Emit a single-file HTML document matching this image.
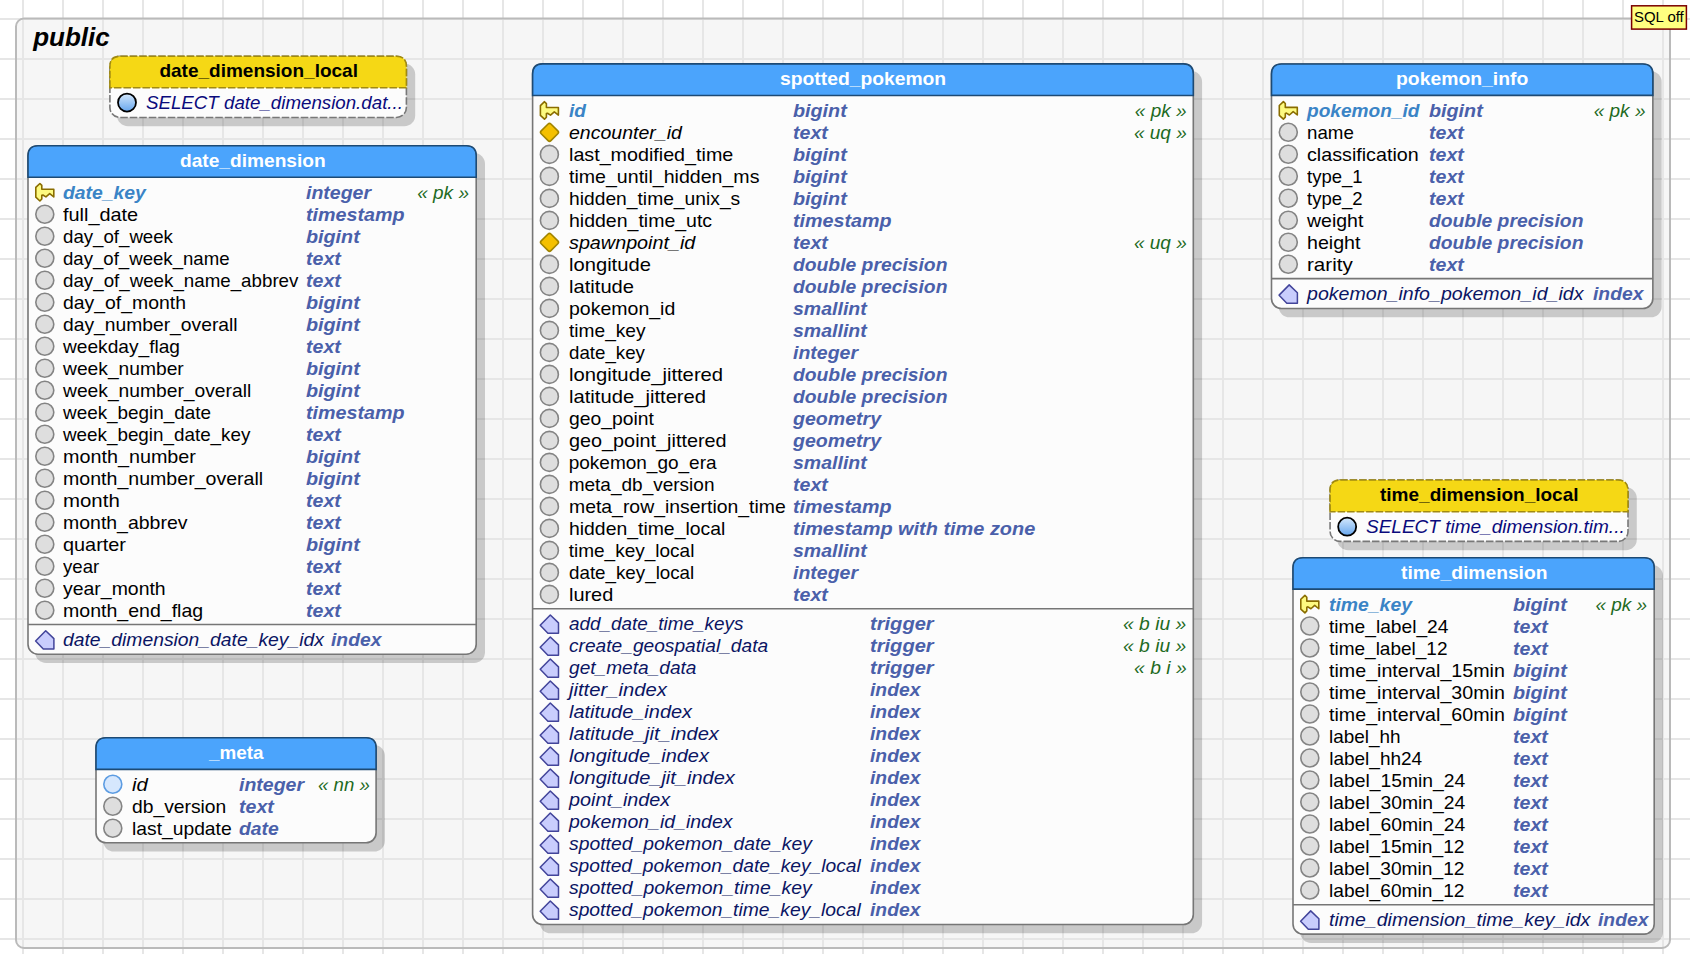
<!DOCTYPE html>
<html><head><meta charset="utf-8"><title>public</title><style>html,body{margin:0;padding:0;}
body{width:1690px;height:954px;position:relative;overflow:hidden;background:#ffffff;font-family:"Liberation Sans", sans-serif;}
svg.bg{position:absolute;left:0;top:0;}
.t{position:absolute;font-size:19px;line-height:22px;white-space:nowrap;transform-origin:0 0;}
</style></head><body>
<svg class="bg" width="1690" height="954" viewBox="0 0 1690 954"><defs><linearGradient id="gv" x1="0" y1="0" x2="0" y2="1"><stop offset="0" stop-color="#d4e8fc"/><stop offset="1" stop-color="#66a6ee"/></linearGradient></defs>
<rect x="0" y="0" width="1690" height="954" fill="#ffffff"/>
<rect x="16" y="18.5" width="1654" height="929.5" rx="8" fill="#f6f6f6"/>
<path d="M23,0V954M63,0V954M103,0V954M143,0V954M183,0V954M223,0V954M263,0V954M303,0V954M343,0V954M383,0V954M423,0V954M463,0V954M503,0V954M543,0V954M583,0V954M623,0V954M663,0V954M703,0V954M743,0V954M783,0V954M823,0V954M863,0V954M903,0V954M943,0V954M983,0V954M1023,0V954M1063,0V954M1103,0V954M1143,0V954M1183,0V954M1223,0V954M1263,0V954M1303,0V954M1343,0V954M1383,0V954M1423,0V954M1463,0V954M1503,0V954M1543,0V954M1583,0V954M1623,0V954M1663,0V954M0,19H1690M0,59H1690M0,99H1690M0,139H1690M0,179H1690M0,219H1690M0,259H1690M0,299H1690M0,339H1690M0,379H1690M0,419H1690M0,459H1690M0,499H1690M0,539H1690M0,579H1690M0,619H1690M0,659H1690M0,699H1690M0,739H1690M0,779H1690M0,819H1690M0,859H1690M0,899H1690M0,939H1690" stroke="#e6e6e6" stroke-width="2" fill="none"/>
<rect x="16" y="18.5" width="1654" height="929.5" rx="8" fill="none" stroke="#bababa" stroke-width="2"/>
<rect x="1631.6" y="5.8" width="54.8" height="23.3" fill="#ffff80" stroke="#7a0000" stroke-width="1.5"/>
<rect x="117.10" y="63.50" width="298.10" height="62.75" rx="10.8" fill="rgba(0,0,0,0.18)"/>
<rect x="109.90" y="56.30" width="296.50" height="61.15" rx="10" fill="#fcfcfc" stroke="#787878" stroke-width="1.6" stroke-dasharray="7.5 2"/>
<path d="M109.9,87.7 L109.9,66.3 Q109.9,56.3 119.9,56.3 L396.4,56.3 Q406.4,56.3 406.4,66.3 L406.4,87.7 Z" fill="#f5d815" stroke="#a18a10" stroke-width="1.6" stroke-dasharray="7.5 2"/>
<g transform="translate(109.90,91.40)"><circle cx="17.1" cy="11.2" r="9.0" fill="url(#gv)" stroke="#000" stroke-width="1.8"/></g>
<rect x="35.20" y="153.00" width="449.80" height="510.00" rx="10.8" fill="rgba(0,0,0,0.18)"/>
<rect x="28.00" y="145.80" width="448.20" height="508.40" rx="10" fill="#fcfcfc" stroke="#767676" stroke-width="1.6"/>
<path d="M28.0,177.3 L28.0,155.8 Q28.0,145.8 38.0,145.8 L466.2,145.8 Q476.2,145.8 476.2,155.8 L476.2,177.3 Z" fill="#4ba4fc" stroke="#1d4a74" stroke-width="1.6"/>
<g transform="translate(28.00,181.00)"><polygon points="11.9,2.5 13.8,4.4 13.8,8.3 25.8,8.3 25.8,15.9 21.7,12.6 17.9,15.9 14.9,14.0 13.8,14.3 13.8,18.0 11.9,20.0 7.8,16.2 7.8,6.4" fill="#fdfa80" stroke="#8a6d00" stroke-width="1.6" stroke-linejoin="round"/></g>
<g transform="translate(28.00,203.00)"><circle cx="16.8" cy="11.2" r="9.0" fill="#dedede" stroke="#848484" stroke-width="1.6"/></g>
<g transform="translate(28.00,225.00)"><circle cx="16.8" cy="11.2" r="9.0" fill="#dedede" stroke="#848484" stroke-width="1.6"/></g>
<g transform="translate(28.00,247.00)"><circle cx="16.8" cy="11.2" r="9.0" fill="#dedede" stroke="#848484" stroke-width="1.6"/></g>
<g transform="translate(28.00,269.00)"><circle cx="16.8" cy="11.2" r="9.0" fill="#dedede" stroke="#848484" stroke-width="1.6"/></g>
<g transform="translate(28.00,291.00)"><circle cx="16.8" cy="11.2" r="9.0" fill="#dedede" stroke="#848484" stroke-width="1.6"/></g>
<g transform="translate(28.00,313.00)"><circle cx="16.8" cy="11.2" r="9.0" fill="#dedede" stroke="#848484" stroke-width="1.6"/></g>
<g transform="translate(28.00,335.00)"><circle cx="16.8" cy="11.2" r="9.0" fill="#dedede" stroke="#848484" stroke-width="1.6"/></g>
<g transform="translate(28.00,357.00)"><circle cx="16.8" cy="11.2" r="9.0" fill="#dedede" stroke="#848484" stroke-width="1.6"/></g>
<g transform="translate(28.00,379.00)"><circle cx="16.8" cy="11.2" r="9.0" fill="#dedede" stroke="#848484" stroke-width="1.6"/></g>
<g transform="translate(28.00,401.00)"><circle cx="16.8" cy="11.2" r="9.0" fill="#dedede" stroke="#848484" stroke-width="1.6"/></g>
<g transform="translate(28.00,423.00)"><circle cx="16.8" cy="11.2" r="9.0" fill="#dedede" stroke="#848484" stroke-width="1.6"/></g>
<g transform="translate(28.00,445.00)"><circle cx="16.8" cy="11.2" r="9.0" fill="#dedede" stroke="#848484" stroke-width="1.6"/></g>
<g transform="translate(28.00,467.00)"><circle cx="16.8" cy="11.2" r="9.0" fill="#dedede" stroke="#848484" stroke-width="1.6"/></g>
<g transform="translate(28.00,489.00)"><circle cx="16.8" cy="11.2" r="9.0" fill="#dedede" stroke="#848484" stroke-width="1.6"/></g>
<g transform="translate(28.00,511.00)"><circle cx="16.8" cy="11.2" r="9.0" fill="#dedede" stroke="#848484" stroke-width="1.6"/></g>
<g transform="translate(28.00,533.00)"><circle cx="16.8" cy="11.2" r="9.0" fill="#dedede" stroke="#848484" stroke-width="1.6"/></g>
<g transform="translate(28.00,555.00)"><circle cx="16.8" cy="11.2" r="9.0" fill="#dedede" stroke="#848484" stroke-width="1.6"/></g>
<g transform="translate(28.00,577.00)"><circle cx="16.8" cy="11.2" r="9.0" fill="#dedede" stroke="#848484" stroke-width="1.6"/></g>
<g transform="translate(28.00,599.00)"><circle cx="16.8" cy="11.2" r="9.0" fill="#dedede" stroke="#848484" stroke-width="1.6"/></g>
<line x1="28.00" y1="624.50" x2="476.20" y2="624.50" stroke="#767676" stroke-width="1.6"/>
<g transform="translate(28.00,628.00)"><polygon points="17.7,2.7 25.9,10.6 25.9,21.0 15.3,21.0 7.6,13.0" fill="#c9cdfd" stroke="#42449a" stroke-width="1.5" stroke-linejoin="round"/></g>
<rect x="103.20" y="745.00" width="281.70" height="106.60" rx="10.8" fill="rgba(0,0,0,0.18)"/>
<rect x="96.00" y="737.80" width="280.10" height="105.00" rx="10" fill="#fcfcfc" stroke="#767676" stroke-width="1.6"/>
<path d="M96.0,769.4 L96.0,747.8 Q96.0,737.8 106.0,737.8 L366.1,737.8 Q376.1,737.8 376.1,747.8 L376.1,769.4 Z" fill="#4ba4fc" stroke="#1d4a74" stroke-width="1.6"/>
<g transform="translate(96.00,773.10)"><circle cx="16.8" cy="11.1" r="9.0" fill="#d6e7fd" stroke="#5c9ce2" stroke-width="1.6"/></g>
<g transform="translate(96.00,795.10)"><circle cx="16.8" cy="11.2" r="9.0" fill="#dedede" stroke="#848484" stroke-width="1.6"/></g>
<g transform="translate(96.00,817.10)"><circle cx="16.8" cy="11.2" r="9.0" fill="#dedede" stroke="#848484" stroke-width="1.6"/></g>
<rect x="539.80" y="71.10" width="662.30" height="862.20" rx="10.8" fill="rgba(0,0,0,0.18)"/>
<rect x="532.60" y="63.90" width="660.70" height="860.60" rx="10" fill="#fcfcfc" stroke="#767676" stroke-width="1.6"/>
<path d="M532.6,95.5 L532.6,73.9 Q532.6,63.9 542.6,63.9 L1183.3,63.9 Q1193.3,63.9 1193.3,73.9 L1193.3,95.5 Z" fill="#4ba4fc" stroke="#1d4a74" stroke-width="1.6"/>
<g transform="translate(532.60,99.20)"><polygon points="11.9,2.5 13.8,4.4 13.8,8.3 25.8,8.3 25.8,15.9 21.7,12.6 17.9,15.9 14.9,14.0 13.8,14.3 13.8,18.0 11.9,20.0 7.8,16.2 7.8,6.4" fill="#fdfa80" stroke="#8a6d00" stroke-width="1.6" stroke-linejoin="round"/></g>
<g transform="translate(532.60,121.20)"><rect x="-6.88" y="-6.88" width="13.76" height="13.76" rx="2" transform="translate(16.9,11.1) rotate(45)" fill="#f4c000" stroke="#a08400" stroke-width="1.6"/></g>
<g transform="translate(532.60,143.20)"><circle cx="16.8" cy="11.2" r="9.0" fill="#dedede" stroke="#848484" stroke-width="1.6"/></g>
<g transform="translate(532.60,165.20)"><circle cx="16.8" cy="11.2" r="9.0" fill="#dedede" stroke="#848484" stroke-width="1.6"/></g>
<g transform="translate(532.60,187.20)"><circle cx="16.8" cy="11.2" r="9.0" fill="#dedede" stroke="#848484" stroke-width="1.6"/></g>
<g transform="translate(532.60,209.20)"><circle cx="16.8" cy="11.2" r="9.0" fill="#dedede" stroke="#848484" stroke-width="1.6"/></g>
<g transform="translate(532.60,231.20)"><rect x="-6.88" y="-6.88" width="13.76" height="13.76" rx="2" transform="translate(16.9,11.1) rotate(45)" fill="#f4c000" stroke="#a08400" stroke-width="1.6"/></g>
<g transform="translate(532.60,253.20)"><circle cx="16.8" cy="11.2" r="9.0" fill="#dedede" stroke="#848484" stroke-width="1.6"/></g>
<g transform="translate(532.60,275.20)"><circle cx="16.8" cy="11.2" r="9.0" fill="#dedede" stroke="#848484" stroke-width="1.6"/></g>
<g transform="translate(532.60,297.20)"><circle cx="16.8" cy="11.2" r="9.0" fill="#dedede" stroke="#848484" stroke-width="1.6"/></g>
<g transform="translate(532.60,319.20)"><circle cx="16.8" cy="11.2" r="9.0" fill="#dedede" stroke="#848484" stroke-width="1.6"/></g>
<g transform="translate(532.60,341.20)"><circle cx="16.8" cy="11.2" r="9.0" fill="#dedede" stroke="#848484" stroke-width="1.6"/></g>
<g transform="translate(532.60,363.20)"><circle cx="16.8" cy="11.2" r="9.0" fill="#dedede" stroke="#848484" stroke-width="1.6"/></g>
<g transform="translate(532.60,385.20)"><circle cx="16.8" cy="11.2" r="9.0" fill="#dedede" stroke="#848484" stroke-width="1.6"/></g>
<g transform="translate(532.60,407.20)"><circle cx="16.8" cy="11.2" r="9.0" fill="#dedede" stroke="#848484" stroke-width="1.6"/></g>
<g transform="translate(532.60,429.20)"><circle cx="16.8" cy="11.2" r="9.0" fill="#dedede" stroke="#848484" stroke-width="1.6"/></g>
<g transform="translate(532.60,451.20)"><circle cx="16.8" cy="11.2" r="9.0" fill="#dedede" stroke="#848484" stroke-width="1.6"/></g>
<g transform="translate(532.60,473.20)"><circle cx="16.8" cy="11.2" r="9.0" fill="#dedede" stroke="#848484" stroke-width="1.6"/></g>
<g transform="translate(532.60,495.20)"><circle cx="16.8" cy="11.2" r="9.0" fill="#dedede" stroke="#848484" stroke-width="1.6"/></g>
<g transform="translate(532.60,517.20)"><circle cx="16.8" cy="11.2" r="9.0" fill="#dedede" stroke="#848484" stroke-width="1.6"/></g>
<g transform="translate(532.60,539.20)"><circle cx="16.8" cy="11.2" r="9.0" fill="#dedede" stroke="#848484" stroke-width="1.6"/></g>
<g transform="translate(532.60,561.20)"><circle cx="16.8" cy="11.2" r="9.0" fill="#dedede" stroke="#848484" stroke-width="1.6"/></g>
<g transform="translate(532.60,583.20)"><circle cx="16.8" cy="11.2" r="9.0" fill="#dedede" stroke="#848484" stroke-width="1.6"/></g>
<line x1="532.60" y1="608.80" x2="1193.30" y2="608.80" stroke="#767676" stroke-width="1.6"/>
<g transform="translate(532.60,612.30)"><polygon points="17.7,2.7 25.9,10.6 25.9,21.0 15.3,21.0 7.6,13.0" fill="#c9cdfd" stroke="#42449a" stroke-width="1.5" stroke-linejoin="round"/></g>
<g transform="translate(532.60,634.30)"><polygon points="17.7,2.7 25.9,10.6 25.9,21.0 15.3,21.0 7.6,13.0" fill="#c9cdfd" stroke="#42449a" stroke-width="1.5" stroke-linejoin="round"/></g>
<g transform="translate(532.60,656.30)"><polygon points="17.7,2.7 25.9,10.6 25.9,21.0 15.3,21.0 7.6,13.0" fill="#c9cdfd" stroke="#42449a" stroke-width="1.5" stroke-linejoin="round"/></g>
<g transform="translate(532.60,678.30)"><polygon points="17.7,2.7 25.9,10.6 25.9,21.0 15.3,21.0 7.6,13.0" fill="#c9cdfd" stroke="#42449a" stroke-width="1.5" stroke-linejoin="round"/></g>
<g transform="translate(532.60,700.30)"><polygon points="17.7,2.7 25.9,10.6 25.9,21.0 15.3,21.0 7.6,13.0" fill="#c9cdfd" stroke="#42449a" stroke-width="1.5" stroke-linejoin="round"/></g>
<g transform="translate(532.60,722.30)"><polygon points="17.7,2.7 25.9,10.6 25.9,21.0 15.3,21.0 7.6,13.0" fill="#c9cdfd" stroke="#42449a" stroke-width="1.5" stroke-linejoin="round"/></g>
<g transform="translate(532.60,744.30)"><polygon points="17.7,2.7 25.9,10.6 25.9,21.0 15.3,21.0 7.6,13.0" fill="#c9cdfd" stroke="#42449a" stroke-width="1.5" stroke-linejoin="round"/></g>
<g transform="translate(532.60,766.30)"><polygon points="17.7,2.7 25.9,10.6 25.9,21.0 15.3,21.0 7.6,13.0" fill="#c9cdfd" stroke="#42449a" stroke-width="1.5" stroke-linejoin="round"/></g>
<g transform="translate(532.60,788.30)"><polygon points="17.7,2.7 25.9,10.6 25.9,21.0 15.3,21.0 7.6,13.0" fill="#c9cdfd" stroke="#42449a" stroke-width="1.5" stroke-linejoin="round"/></g>
<g transform="translate(532.60,810.30)"><polygon points="17.7,2.7 25.9,10.6 25.9,21.0 15.3,21.0 7.6,13.0" fill="#c9cdfd" stroke="#42449a" stroke-width="1.5" stroke-linejoin="round"/></g>
<g transform="translate(532.60,832.30)"><polygon points="17.7,2.7 25.9,10.6 25.9,21.0 15.3,21.0 7.6,13.0" fill="#c9cdfd" stroke="#42449a" stroke-width="1.5" stroke-linejoin="round"/></g>
<g transform="translate(532.60,854.30)"><polygon points="17.7,2.7 25.9,10.6 25.9,21.0 15.3,21.0 7.6,13.0" fill="#c9cdfd" stroke="#42449a" stroke-width="1.5" stroke-linejoin="round"/></g>
<g transform="translate(532.60,876.30)"><polygon points="17.7,2.7 25.9,10.6 25.9,21.0 15.3,21.0 7.6,13.0" fill="#c9cdfd" stroke="#42449a" stroke-width="1.5" stroke-linejoin="round"/></g>
<g transform="translate(532.60,898.30)"><polygon points="17.7,2.7 25.9,10.6 25.9,21.0 15.3,21.0 7.6,13.0" fill="#c9cdfd" stroke="#42449a" stroke-width="1.5" stroke-linejoin="round"/></g>
<rect x="1278.70" y="71.20" width="382.95" height="246.10" rx="10.8" fill="rgba(0,0,0,0.18)"/>
<rect x="1271.50" y="64.00" width="381.35" height="244.50" rx="10" fill="#fcfcfc" stroke="#767676" stroke-width="1.6"/>
<path d="M1271.5,95.4 L1271.5,74.0 Q1271.5,64.0 1281.5,64.0 L1642.85,64.0 Q1652.85,64.0 1652.85,74.0 L1652.85,95.4 Z" fill="#4ba4fc" stroke="#1d4a74" stroke-width="1.6"/>
<g transform="translate(1271.50,99.10)"><polygon points="11.9,2.5 13.8,4.4 13.8,8.3 25.8,8.3 25.8,15.9 21.7,12.6 17.9,15.9 14.9,14.0 13.8,14.3 13.8,18.0 11.9,20.0 7.8,16.2 7.8,6.4" fill="#fdfa80" stroke="#8a6d00" stroke-width="1.6" stroke-linejoin="round"/></g>
<g transform="translate(1271.50,121.10)"><circle cx="16.8" cy="11.2" r="9.0" fill="#dedede" stroke="#848484" stroke-width="1.6"/></g>
<g transform="translate(1271.50,143.10)"><circle cx="16.8" cy="11.2" r="9.0" fill="#dedede" stroke="#848484" stroke-width="1.6"/></g>
<g transform="translate(1271.50,165.10)"><circle cx="16.8" cy="11.2" r="9.0" fill="#dedede" stroke="#848484" stroke-width="1.6"/></g>
<g transform="translate(1271.50,187.10)"><circle cx="16.8" cy="11.2" r="9.0" fill="#dedede" stroke="#848484" stroke-width="1.6"/></g>
<g transform="translate(1271.50,209.10)"><circle cx="16.8" cy="11.2" r="9.0" fill="#dedede" stroke="#848484" stroke-width="1.6"/></g>
<g transform="translate(1271.50,231.10)"><circle cx="16.8" cy="11.2" r="9.0" fill="#dedede" stroke="#848484" stroke-width="1.6"/></g>
<g transform="translate(1271.50,253.10)"><circle cx="16.8" cy="11.2" r="9.0" fill="#dedede" stroke="#848484" stroke-width="1.6"/></g>
<line x1="1271.50" y1="278.65" x2="1652.85" y2="278.65" stroke="#767676" stroke-width="1.6"/>
<g transform="translate(1271.50,282.15)"><polygon points="17.7,2.7 25.9,10.6 25.9,21.0 15.3,21.0 7.6,13.0" fill="#c9cdfd" stroke="#42449a" stroke-width="1.5" stroke-linejoin="round"/></g>
<rect x="1337.27" y="487.25" width="299.53" height="62.95" rx="10.8" fill="rgba(0,0,0,0.18)"/>
<rect x="1330.07" y="480.05" width="297.93" height="61.35" rx="10" fill="#fcfcfc" stroke="#787878" stroke-width="1.6" stroke-dasharray="7.5 2"/>
<path d="M1330.07,511.76 L1330.07,490.05 Q1330.07,480.05 1340.07,480.05 L1618.0,480.05 Q1628.0,480.05 1628.0,490.05 L1628.0,511.76 Z" fill="#f5d815" stroke="#a18a10" stroke-width="1.6" stroke-dasharray="7.5 2"/>
<g transform="translate(1330.07,515.46)"><circle cx="17.1" cy="11.2" r="9.0" fill="url(#gv)" stroke="#000" stroke-width="1.8"/></g>
<rect x="1300.20" y="565.00" width="362.80" height="377.90" rx="10.8" fill="rgba(0,0,0,0.18)"/>
<rect x="1293.00" y="557.80" width="361.20" height="376.30" rx="10" fill="#fcfcfc" stroke="#767676" stroke-width="1.6"/>
<path d="M1293.0,589.15 L1293.0,567.8 Q1293.0,557.8 1303.0,557.8 L1644.2,557.8 Q1654.2,557.8 1654.2,567.8 L1654.2,589.15 Z" fill="#4ba4fc" stroke="#1d4a74" stroke-width="1.6"/>
<g transform="translate(1293.00,592.85)"><polygon points="11.9,2.5 13.8,4.4 13.8,8.3 25.8,8.3 25.8,15.9 21.7,12.6 17.9,15.9 14.9,14.0 13.8,14.3 13.8,18.0 11.9,20.0 7.8,16.2 7.8,6.4" fill="#fdfa80" stroke="#8a6d00" stroke-width="1.6" stroke-linejoin="round"/></g>
<g transform="translate(1293.00,614.85)"><circle cx="16.8" cy="11.2" r="9.0" fill="#dedede" stroke="#848484" stroke-width="1.6"/></g>
<g transform="translate(1293.00,636.85)"><circle cx="16.8" cy="11.2" r="9.0" fill="#dedede" stroke="#848484" stroke-width="1.6"/></g>
<g transform="translate(1293.00,658.85)"><circle cx="16.8" cy="11.2" r="9.0" fill="#dedede" stroke="#848484" stroke-width="1.6"/></g>
<g transform="translate(1293.00,680.85)"><circle cx="16.8" cy="11.2" r="9.0" fill="#dedede" stroke="#848484" stroke-width="1.6"/></g>
<g transform="translate(1293.00,702.85)"><circle cx="16.8" cy="11.2" r="9.0" fill="#dedede" stroke="#848484" stroke-width="1.6"/></g>
<g transform="translate(1293.00,724.85)"><circle cx="16.8" cy="11.2" r="9.0" fill="#dedede" stroke="#848484" stroke-width="1.6"/></g>
<g transform="translate(1293.00,746.85)"><circle cx="16.8" cy="11.2" r="9.0" fill="#dedede" stroke="#848484" stroke-width="1.6"/></g>
<g transform="translate(1293.00,768.85)"><circle cx="16.8" cy="11.2" r="9.0" fill="#dedede" stroke="#848484" stroke-width="1.6"/></g>
<g transform="translate(1293.00,790.85)"><circle cx="16.8" cy="11.2" r="9.0" fill="#dedede" stroke="#848484" stroke-width="1.6"/></g>
<g transform="translate(1293.00,812.85)"><circle cx="16.8" cy="11.2" r="9.0" fill="#dedede" stroke="#848484" stroke-width="1.6"/></g>
<g transform="translate(1293.00,834.85)"><circle cx="16.8" cy="11.2" r="9.0" fill="#dedede" stroke="#848484" stroke-width="1.6"/></g>
<g transform="translate(1293.00,856.85)"><circle cx="16.8" cy="11.2" r="9.0" fill="#dedede" stroke="#848484" stroke-width="1.6"/></g>
<g transform="translate(1293.00,878.85)"><circle cx="16.8" cy="11.2" r="9.0" fill="#dedede" stroke="#848484" stroke-width="1.6"/></g>
<line x1="1293.00" y1="904.70" x2="1654.20" y2="904.70" stroke="#767676" stroke-width="1.6"/>
<g transform="translate(1293.00,908.20)"><polygon points="17.7,2.7 25.9,10.6 25.9,21.0 15.3,21.0 7.6,13.0" fill="#c9cdfd" stroke="#42449a" stroke-width="1.5" stroke-linejoin="round"/></g>
</svg>
<div class="t" style="left:33.20px;top:22.40px;color:#000;font-weight:bold;font-style:italic;font-size:26px;line-height:30px;">public</div>
<div class="t" style="left:1633.91px;top:4.80px;color:#000;font-size:15px;line-height:24px;transform:scaleX(0.9939);">SQL off</div>
<div class="t" style="left:159.45px;top:60.30px;color:#000;font-weight:bold;">date_dimension_local</div>
<div class="t" style="left:145.90px;top:92.40px;color:#0a0a7c;font-style:italic;transform:scaleX(0.9849);">SELECT date_dimension.dat...</div>
<div class="t" style="left:179.60px;top:149.80px;color:#fff;font-weight:bold;transform:scaleX(1.0069);">date_dimension</div>
<div class="t" style="left:63.30px;top:182.00px;color:#3a84c6;font-weight:bold;font-style:italic;transform:scaleX(1.0183);">date_key</div>
<div class="t" style="left:306.40px;top:182.00px;color:#4a60aa;font-weight:bold;font-style:italic;transform:scaleX(1.0262);">integer</div>
<div class="t" style="left:417.20px;top:182.00px;color:#1e6a1e;font-style:italic;">« pk »</div>
<div class="t" style="left:63.30px;top:204.00px;color:#000000;transform:scaleX(1.0465);">full_date</div>
<div class="t" style="left:306.40px;top:204.00px;color:#4a60aa;font-weight:bold;font-style:italic;transform:scaleX(1.0372);">timestamp</div>
<div class="t" style="left:63.30px;top:226.00px;color:#000000;transform:scaleX(0.9820);">day_of_week</div>
<div class="t" style="left:306.40px;top:226.00px;color:#4a60aa;font-weight:bold;font-style:italic;transform:scaleX(1.0396);">bigint</div>
<div class="t" style="left:63.30px;top:248.00px;color:#000000;transform:scaleX(0.9793);">day_of_week_name</div>
<div class="t" style="left:306.40px;top:248.00px;color:#4a60aa;font-weight:bold;font-style:italic;transform:scaleX(1.0294);">text</div>
<div class="t" style="left:63.30px;top:270.00px;color:#000000;transform:scaleX(0.9861);">day_of_week_name_abbrev</div>
<div class="t" style="left:306.40px;top:270.00px;color:#4a60aa;font-weight:bold;font-style:italic;transform:scaleX(1.0294);">text</div>
<div class="t" style="left:63.30px;top:292.00px;color:#000000;transform:scaleX(1.0212);">day_of_month</div>
<div class="t" style="left:306.40px;top:292.00px;color:#4a60aa;font-weight:bold;font-style:italic;transform:scaleX(1.0396);">bigint</div>
<div class="t" style="left:63.30px;top:314.00px;color:#000000;transform:scaleX(1.0141);">day_number_overall</div>
<div class="t" style="left:306.40px;top:314.00px;color:#4a60aa;font-weight:bold;font-style:italic;transform:scaleX(1.0396);">bigint</div>
<div class="t" style="left:63.30px;top:336.00px;color:#000000;transform:scaleX(1.0070);">weekday_flag</div>
<div class="t" style="left:306.40px;top:336.00px;color:#4a60aa;font-weight:bold;font-style:italic;transform:scaleX(1.0294);">text</div>
<div class="t" style="left:63.30px;top:358.00px;color:#000000;transform:scaleX(1.0118);">week_number</div>
<div class="t" style="left:306.40px;top:358.00px;color:#4a60aa;font-weight:bold;font-style:italic;transform:scaleX(1.0396);">bigint</div>
<div class="t" style="left:63.30px;top:380.00px;color:#000000;transform:scaleX(1.0124);">week_number_overall</div>
<div class="t" style="left:306.40px;top:380.00px;color:#4a60aa;font-weight:bold;font-style:italic;transform:scaleX(1.0396);">bigint</div>
<div class="t" style="left:63.30px;top:402.00px;color:#000000;transform:scaleX(0.9940);">week_begin_date</div>
<div class="t" style="left:306.40px;top:402.00px;color:#4a60aa;font-weight:bold;font-style:italic;transform:scaleX(1.0372);">timestamp</div>
<div class="t" style="left:63.30px;top:424.00px;color:#000000;transform:scaleX(0.9910);">week_begin_date_key</div>
<div class="t" style="left:306.40px;top:424.00px;color:#4a60aa;font-weight:bold;font-style:italic;transform:scaleX(1.0294);">text</div>
<div class="t" style="left:63.30px;top:446.00px;color:#000000;transform:scaleX(1.0402);">month_number</div>
<div class="t" style="left:306.40px;top:446.00px;color:#4a60aa;font-weight:bold;font-style:italic;transform:scaleX(1.0396);">bigint</div>
<div class="t" style="left:63.30px;top:468.00px;color:#000000;transform:scaleX(1.0302);">month_number_overall</div>
<div class="t" style="left:306.40px;top:468.00px;color:#4a60aa;font-weight:bold;font-style:italic;transform:scaleX(1.0396);">bigint</div>
<div class="t" style="left:63.30px;top:490.00px;color:#000000;transform:scaleX(1.0745);">month</div>
<div class="t" style="left:306.40px;top:490.00px;color:#4a60aa;font-weight:bold;font-style:italic;transform:scaleX(1.0294);">text</div>
<div class="t" style="left:63.30px;top:512.00px;color:#000000;transform:scaleX(1.0248);">month_abbrev</div>
<div class="t" style="left:306.40px;top:512.00px;color:#4a60aa;font-weight:bold;font-style:italic;transform:scaleX(1.0294);">text</div>
<div class="t" style="left:63.30px;top:534.00px;color:#000000;transform:scaleX(1.0458);">quarter</div>
<div class="t" style="left:306.40px;top:534.00px;color:#4a60aa;font-weight:bold;font-style:italic;transform:scaleX(1.0396);">bigint</div>
<div class="t" style="left:63.30px;top:556.00px;color:#000000;transform:scaleX(0.9784);">year</div>
<div class="t" style="left:306.40px;top:556.00px;color:#4a60aa;font-weight:bold;font-style:italic;transform:scaleX(1.0294);">text</div>
<div class="t" style="left:63.30px;top:578.00px;color:#000000;transform:scaleX(1.0232);">year_month</div>
<div class="t" style="left:306.40px;top:578.00px;color:#4a60aa;font-weight:bold;font-style:italic;transform:scaleX(1.0294);">text</div>
<div class="t" style="left:63.30px;top:600.00px;color:#000000;transform:scaleX(1.0284);">month_end_flag</div>
<div class="t" style="left:306.40px;top:600.00px;color:#4a60aa;font-weight:bold;font-style:italic;transform:scaleX(1.0294);">text</div>
<div class="t" style="left:63.30px;top:629.00px;color:#0b1563;font-style:italic;transform:scaleX(1.0163);">date_dimension_date_key_idx</div>
<div class="t" style="left:331.00px;top:629.00px;color:#4a60aa;font-weight:bold;font-style:italic;transform:scaleX(1.0160);">index</div>
<div class="t" style="left:208.80px;top:741.80px;color:#fff;font-weight:bold;transform:scaleX(0.9909);">_meta</div>
<div class="t" style="left:132.00px;top:774.10px;color:#000000;font-style:italic;transform:scaleX(1.0687);">id</div>
<div class="t" style="left:239.20px;top:774.10px;color:#4a60aa;font-weight:bold;font-style:italic;transform:scaleX(1.0262);">integer</div>
<div class="t" style="left:317.70px;top:774.10px;color:#1e6a1e;font-style:italic;transform:scaleX(0.9804);">« nn »</div>
<div class="t" style="left:132.00px;top:796.10px;color:#000000;transform:scaleX(1.0143);">db_version</div>
<div class="t" style="left:239.20px;top:796.10px;color:#4a60aa;font-weight:bold;font-style:italic;transform:scaleX(1.0294);">text</div>
<div class="t" style="left:132.00px;top:818.10px;color:#000000;transform:scaleX(1.0144);">last_update</div>
<div class="t" style="left:239.20px;top:818.10px;color:#4a60aa;font-weight:bold;font-style:italic;transform:scaleX(1.0179);">date</div>
<div class="t" style="left:779.68px;top:67.90px;color:#fff;font-weight:bold;transform:scaleX(1.0154);">spotted_pokemon</div>
<div class="t" style="left:568.70px;top:100.20px;color:#3a84c6;font-weight:bold;font-style:italic;transform:scaleX(1.0056);">id</div>
<div class="t" style="left:793.00px;top:100.20px;color:#4a60aa;font-weight:bold;font-style:italic;transform:scaleX(1.0396);">bigint</div>
<div class="t" style="left:1134.80px;top:100.20px;color:#1e6a1e;font-style:italic;">« pk »</div>
<div class="t" style="left:568.70px;top:122.20px;color:#000000;font-style:italic;transform:scaleX(1.0270);">encounter_id</div>
<div class="t" style="left:793.00px;top:122.20px;color:#4a60aa;font-weight:bold;font-style:italic;transform:scaleX(1.0294);">text</div>
<div class="t" style="left:1133.90px;top:122.20px;color:#1e6a1e;font-style:italic;">« uq »</div>
<div class="t" style="left:568.70px;top:144.20px;color:#000000;transform:scaleX(1.0369);">last_modified_time</div>
<div class="t" style="left:793.00px;top:144.20px;color:#4a60aa;font-weight:bold;font-style:italic;transform:scaleX(1.0396);">bigint</div>
<div class="t" style="left:568.70px;top:166.20px;color:#000000;transform:scaleX(1.0304);">time_until_hidden_ms</div>
<div class="t" style="left:793.00px;top:166.20px;color:#4a60aa;font-weight:bold;font-style:italic;transform:scaleX(1.0396);">bigint</div>
<div class="t" style="left:568.70px;top:188.20px;color:#000000;transform:scaleX(1.0131);">hidden_time_unix_s</div>
<div class="t" style="left:793.00px;top:188.20px;color:#4a60aa;font-weight:bold;font-style:italic;transform:scaleX(1.0396);">bigint</div>
<div class="t" style="left:568.70px;top:210.20px;color:#000000;transform:scaleX(1.0261);">hidden_time_utc</div>
<div class="t" style="left:793.00px;top:210.20px;color:#4a60aa;font-weight:bold;font-style:italic;transform:scaleX(1.0372);">timestamp</div>
<div class="t" style="left:568.70px;top:232.20px;color:#000000;font-style:italic;transform:scaleX(1.0402);">spawnpoint_id</div>
<div class="t" style="left:793.00px;top:232.20px;color:#4a60aa;font-weight:bold;font-style:italic;transform:scaleX(1.0294);">text</div>
<div class="t" style="left:1133.90px;top:232.20px;color:#1e6a1e;font-style:italic;">« uq »</div>
<div class="t" style="left:568.70px;top:254.20px;color:#000000;transform:scaleX(1.0618);">longitude</div>
<div class="t" style="left:793.00px;top:254.20px;color:#4a60aa;font-weight:bold;font-style:italic;transform:scaleX(1.0158);">double precision</div>
<div class="t" style="left:568.70px;top:276.20px;color:#000000;transform:scaleX(1.0617);">latitude</div>
<div class="t" style="left:793.00px;top:276.20px;color:#4a60aa;font-weight:bold;font-style:italic;transform:scaleX(1.0158);">double precision</div>
<div class="t" style="left:568.70px;top:298.20px;color:#000000;transform:scaleX(1.0265);">pokemon_id</div>
<div class="t" style="left:793.00px;top:298.20px;color:#4a60aa;font-weight:bold;font-style:italic;transform:scaleX(1.0274);">smallint</div>
<div class="t" style="left:568.70px;top:320.20px;color:#000000;transform:scaleX(1.0066);">time_key</div>
<div class="t" style="left:793.00px;top:320.20px;color:#4a60aa;font-weight:bold;font-style:italic;transform:scaleX(1.0274);">smallint</div>
<div class="t" style="left:568.70px;top:342.20px;color:#000000;transform:scaleX(0.9842);">date_key</div>
<div class="t" style="left:793.00px;top:342.20px;color:#4a60aa;font-weight:bold;font-style:italic;transform:scaleX(1.0262);">integer</div>
<div class="t" style="left:568.70px;top:364.20px;color:#000000;transform:scaleX(1.0650);">longitude_jittered</div>
<div class="t" style="left:793.00px;top:364.20px;color:#4a60aa;font-weight:bold;font-style:italic;transform:scaleX(1.0158);">double precision</div>
<div class="t" style="left:568.70px;top:386.20px;color:#000000;transform:scaleX(1.0638);">latitude_jittered</div>
<div class="t" style="left:793.00px;top:386.20px;color:#4a60aa;font-weight:bold;font-style:italic;transform:scaleX(1.0158);">double precision</div>
<div class="t" style="left:568.70px;top:408.20px;color:#000000;transform:scaleX(1.0169);">geo_point</div>
<div class="t" style="left:793.00px;top:408.20px;color:#4a60aa;font-weight:bold;font-style:italic;transform:scaleX(1.0291);">geometry</div>
<div class="t" style="left:568.70px;top:430.20px;color:#000000;transform:scaleX(1.0430);">geo_point_jittered</div>
<div class="t" style="left:793.00px;top:430.20px;color:#4a60aa;font-weight:bold;font-style:italic;transform:scaleX(1.0291);">geometry</div>
<div class="t" style="left:568.70px;top:452.20px;color:#000000;">pokemon_go_era</div>
<div class="t" style="left:793.00px;top:452.20px;color:#4a60aa;font-weight:bold;font-style:italic;transform:scaleX(1.0274);">smallint</div>
<div class="t" style="left:568.70px;top:474.20px;color:#000000;">meta_db_version</div>
<div class="t" style="left:793.00px;top:474.20px;color:#4a60aa;font-weight:bold;font-style:italic;transform:scaleX(1.0294);">text</div>
<div class="t" style="left:568.70px;top:496.20px;color:#000000;transform:scaleX(1.0209);">meta_row_insertion_time</div>
<div class="t" style="left:793.00px;top:496.20px;color:#4a60aa;font-weight:bold;font-style:italic;transform:scaleX(1.0372);">timestamp</div>
<div class="t" style="left:568.70px;top:518.20px;color:#000000;transform:scaleX(1.0205);">hidden_time_local</div>
<div class="t" style="left:793.00px;top:518.20px;color:#4a60aa;font-weight:bold;font-style:italic;transform:scaleX(1.0478);">timestamp with time zone</div>
<div class="t" style="left:568.70px;top:540.20px;color:#000000;">time_key_local</div>
<div class="t" style="left:793.00px;top:540.20px;color:#4a60aa;font-weight:bold;font-style:italic;transform:scaleX(1.0274);">smallint</div>
<div class="t" style="left:568.70px;top:562.20px;color:#000000;transform:scaleX(0.9880);">date_key_local</div>
<div class="t" style="left:793.00px;top:562.20px;color:#4a60aa;font-weight:bold;font-style:italic;transform:scaleX(1.0262);">integer</div>
<div class="t" style="left:568.70px;top:584.20px;color:#000000;transform:scaleX(1.0475);">lured</div>
<div class="t" style="left:793.00px;top:584.20px;color:#4a60aa;font-weight:bold;font-style:italic;transform:scaleX(1.0294);">text</div>
<div class="t" style="left:568.70px;top:613.30px;color:#0b1563;font-style:italic;transform:scaleX(0.9943);">add_date_time_keys</div>
<div class="t" style="left:869.60px;top:613.30px;color:#4a60aa;font-weight:bold;font-style:italic;transform:scaleX(1.0583);">trigger</div>
<div class="t" style="left:1122.90px;top:613.30px;color:#1e6a1e;font-style:italic;transform:scaleX(1.0148);">« b iu »</div>
<div class="t" style="left:568.70px;top:635.30px;color:#0b1563;font-style:italic;transform:scaleX(1.0081);">create_geospatial_data</div>
<div class="t" style="left:869.60px;top:635.30px;color:#4a60aa;font-weight:bold;font-style:italic;transform:scaleX(1.0583);">trigger</div>
<div class="t" style="left:1122.90px;top:635.30px;color:#1e6a1e;font-style:italic;transform:scaleX(1.0148);">« b iu »</div>
<div class="t" style="left:568.70px;top:657.30px;color:#0b1563;font-style:italic;transform:scaleX(1.0056);">get_meta_data</div>
<div class="t" style="left:869.60px;top:657.30px;color:#4a60aa;font-weight:bold;font-style:italic;transform:scaleX(1.0583);">trigger</div>
<div class="t" style="left:1133.90px;top:657.30px;color:#1e6a1e;font-style:italic;transform:scaleX(1.0180);">« b i »</div>
<div class="t" style="left:568.70px;top:679.30px;color:#0b1563;font-style:italic;transform:scaleX(1.0653);">jitter_index</div>
<div class="t" style="left:869.60px;top:679.30px;color:#4a60aa;font-weight:bold;font-style:italic;transform:scaleX(1.0160);">index</div>
<div class="t" style="left:568.70px;top:701.30px;color:#0b1563;font-style:italic;transform:scaleX(1.0492);">latitude_index</div>
<div class="t" style="left:869.60px;top:701.30px;color:#4a60aa;font-weight:bold;font-style:italic;transform:scaleX(1.0160);">index</div>
<div class="t" style="left:568.70px;top:723.30px;color:#0b1563;font-style:italic;transform:scaleX(1.0592);">latitude_jit_index</div>
<div class="t" style="left:869.60px;top:723.30px;color:#4a60aa;font-weight:bold;font-style:italic;transform:scaleX(1.0160);">index</div>
<div class="t" style="left:568.70px;top:745.30px;color:#0b1563;font-style:italic;transform:scaleX(1.0515);">longitude_index</div>
<div class="t" style="left:869.60px;top:745.30px;color:#4a60aa;font-weight:bold;font-style:italic;transform:scaleX(1.0160);">index</div>
<div class="t" style="left:568.70px;top:767.30px;color:#0b1563;font-style:italic;transform:scaleX(1.0538);">longitude_jit_index</div>
<div class="t" style="left:869.60px;top:767.30px;color:#4a60aa;font-weight:bold;font-style:italic;transform:scaleX(1.0160);">index</div>
<div class="t" style="left:568.70px;top:789.30px;color:#0b1563;font-style:italic;transform:scaleX(1.0414);">point_index</div>
<div class="t" style="left:869.60px;top:789.30px;color:#4a60aa;font-weight:bold;font-style:italic;transform:scaleX(1.0160);">index</div>
<div class="t" style="left:568.70px;top:811.30px;color:#0b1563;font-style:italic;transform:scaleX(1.0248);">pokemon_id_index</div>
<div class="t" style="left:869.60px;top:811.30px;color:#4a60aa;font-weight:bold;font-style:italic;transform:scaleX(1.0160);">index</div>
<div class="t" style="left:568.70px;top:833.30px;color:#0b1563;font-style:italic;transform:scaleX(1.0171);">spotted_pokemon_date_key</div>
<div class="t" style="left:869.60px;top:833.30px;color:#4a60aa;font-weight:bold;font-style:italic;transform:scaleX(1.0160);">index</div>
<div class="t" style="left:568.70px;top:855.30px;color:#0b1563;font-style:italic;transform:scaleX(1.0118);">spotted_pokemon_date_key_local</div>
<div class="t" style="left:869.60px;top:855.30px;color:#4a60aa;font-weight:bold;font-style:italic;transform:scaleX(1.0160);">index</div>
<div class="t" style="left:568.70px;top:877.30px;color:#0b1563;font-style:italic;transform:scaleX(1.0213);">spotted_pokemon_time_key</div>
<div class="t" style="left:869.60px;top:877.30px;color:#4a60aa;font-weight:bold;font-style:italic;transform:scaleX(1.0160);">index</div>
<div class="t" style="left:568.70px;top:899.30px;color:#0b1563;font-style:italic;transform:scaleX(1.0153);">spotted_pokemon_time_key_local</div>
<div class="t" style="left:869.60px;top:899.30px;color:#4a60aa;font-weight:bold;font-style:italic;transform:scaleX(1.0160);">index</div>
<div class="t" style="left:1395.96px;top:68.00px;color:#fff;font-weight:bold;transform:scaleX(1.0188);">pokemon_info</div>
<div class="t" style="left:1307.20px;top:100.10px;color:#3a84c6;font-weight:bold;font-style:italic;transform:scaleX(1.0053);">pokemon_id</div>
<div class="t" style="left:1428.90px;top:100.10px;color:#4a60aa;font-weight:bold;font-style:italic;transform:scaleX(1.0396);">bigint</div>
<div class="t" style="left:1593.70px;top:100.10px;color:#1e6a1e;font-style:italic;">« pk »</div>
<div class="t" style="left:1307.20px;top:122.10px;color:#000000;transform:scaleX(0.9848);">name</div>
<div class="t" style="left:1428.90px;top:122.10px;color:#4a60aa;font-weight:bold;font-style:italic;transform:scaleX(1.0294);">text</div>
<div class="t" style="left:1307.20px;top:144.10px;color:#000000;transform:scaleX(1.0368);">classification</div>
<div class="t" style="left:1428.90px;top:144.10px;color:#4a60aa;font-weight:bold;font-style:italic;transform:scaleX(1.0294);">text</div>
<div class="t" style="left:1307.20px;top:166.10px;color:#000000;transform:scaleX(0.9737);">type_1</div>
<div class="t" style="left:1428.90px;top:166.10px;color:#4a60aa;font-weight:bold;font-style:italic;transform:scaleX(1.0294);">text</div>
<div class="t" style="left:1307.20px;top:188.10px;color:#000000;transform:scaleX(0.9737);">type_2</div>
<div class="t" style="left:1428.90px;top:188.10px;color:#4a60aa;font-weight:bold;font-style:italic;transform:scaleX(1.0294);">text</div>
<div class="t" style="left:1307.20px;top:210.10px;color:#000000;transform:scaleX(1.0255);">weight</div>
<div class="t" style="left:1428.90px;top:210.10px;color:#4a60aa;font-weight:bold;font-style:italic;transform:scaleX(1.0158);">double precision</div>
<div class="t" style="left:1307.20px;top:232.10px;color:#000000;transform:scaleX(1.0333);">height</div>
<div class="t" style="left:1428.90px;top:232.10px;color:#4a60aa;font-weight:bold;font-style:italic;transform:scaleX(1.0158);">double precision</div>
<div class="t" style="left:1307.20px;top:254.10px;color:#000000;transform:scaleX(1.0829);">rarity</div>
<div class="t" style="left:1428.90px;top:254.10px;color:#4a60aa;font-weight:bold;font-style:italic;transform:scaleX(1.0294);">text</div>
<div class="t" style="left:1307.20px;top:283.15px;color:#0b1563;font-style:italic;transform:scaleX(1.0304);">pokemon_info_pokemon_id_idx</div>
<div class="t" style="left:1592.50px;top:283.15px;color:#4a60aa;font-weight:bold;font-style:italic;transform:scaleX(1.0160);">index</div>
<div class="t" style="left:1380.03px;top:484.05px;color:#000;font-weight:bold;">time_dimension_local</div>
<div class="t" style="left:1366.00px;top:516.46px;color:#0a0a7c;font-style:italic;">SELECT time_dimension.tim...</div>
<div class="t" style="left:1400.70px;top:561.80px;color:#fff;font-weight:bold;transform:scaleX(1.0125);">time_dimension</div>
<div class="t" style="left:1329.20px;top:593.85px;color:#3a84c6;font-weight:bold;font-style:italic;transform:scaleX(1.0198);">time_key</div>
<div class="t" style="left:1512.60px;top:593.85px;color:#4a60aa;font-weight:bold;font-style:italic;transform:scaleX(1.0396);">bigint</div>
<div class="t" style="left:1595.40px;top:593.85px;color:#1e6a1e;font-style:italic;">« pk »</div>
<div class="t" style="left:1329.20px;top:615.85px;color:#000000;transform:scaleX(1.0093);">time_label_24</div>
<div class="t" style="left:1512.60px;top:615.85px;color:#4a60aa;font-weight:bold;font-style:italic;transform:scaleX(1.0294);">text</div>
<div class="t" style="left:1329.20px;top:637.85px;color:#000000;">time_label_12</div>
<div class="t" style="left:1512.60px;top:637.85px;color:#4a60aa;font-weight:bold;font-style:italic;transform:scaleX(1.0294);">text</div>
<div class="t" style="left:1329.20px;top:659.85px;color:#000000;transform:scaleX(1.0343);">time_interval_15min</div>
<div class="t" style="left:1512.60px;top:659.85px;color:#4a60aa;font-weight:bold;font-style:italic;transform:scaleX(1.0396);">bigint</div>
<div class="t" style="left:1329.20px;top:681.85px;color:#000000;transform:scaleX(1.0343);">time_interval_30min</div>
<div class="t" style="left:1512.60px;top:681.85px;color:#4a60aa;font-weight:bold;font-style:italic;transform:scaleX(1.0396);">bigint</div>
<div class="t" style="left:1329.20px;top:703.85px;color:#000000;transform:scaleX(1.0343);">time_interval_60min</div>
<div class="t" style="left:1512.60px;top:703.85px;color:#4a60aa;font-weight:bold;font-style:italic;transform:scaleX(1.0396);">bigint</div>
<div class="t" style="left:1329.20px;top:725.85px;color:#000000;transform:scaleX(0.9957);">label_hh</div>
<div class="t" style="left:1512.60px;top:725.85px;color:#4a60aa;font-weight:bold;font-style:italic;transform:scaleX(1.0294);">text</div>
<div class="t" style="left:1329.20px;top:747.85px;color:#000000;">label_hh24</div>
<div class="t" style="left:1512.60px;top:747.85px;color:#4a60aa;font-weight:bold;font-style:italic;transform:scaleX(1.0294);">text</div>
<div class="t" style="left:1329.20px;top:769.85px;color:#000000;transform:scaleX(1.0158);">label_15min_24</div>
<div class="t" style="left:1512.60px;top:769.85px;color:#4a60aa;font-weight:bold;font-style:italic;transform:scaleX(1.0294);">text</div>
<div class="t" style="left:1329.20px;top:791.85px;color:#000000;transform:scaleX(1.0158);">label_30min_24</div>
<div class="t" style="left:1512.60px;top:791.85px;color:#4a60aa;font-weight:bold;font-style:italic;transform:scaleX(1.0294);">text</div>
<div class="t" style="left:1329.20px;top:813.85px;color:#000000;transform:scaleX(1.0158);">label_60min_24</div>
<div class="t" style="left:1512.60px;top:813.85px;color:#4a60aa;font-weight:bold;font-style:italic;transform:scaleX(1.0294);">text</div>
<div class="t" style="left:1329.20px;top:835.85px;color:#000000;transform:scaleX(1.0098);">label_15min_12</div>
<div class="t" style="left:1512.60px;top:835.85px;color:#4a60aa;font-weight:bold;font-style:italic;transform:scaleX(1.0294);">text</div>
<div class="t" style="left:1329.20px;top:857.85px;color:#000000;transform:scaleX(1.0098);">label_30min_12</div>
<div class="t" style="left:1512.60px;top:857.85px;color:#4a60aa;font-weight:bold;font-style:italic;transform:scaleX(1.0294);">text</div>
<div class="t" style="left:1329.20px;top:879.85px;color:#000000;transform:scaleX(1.0098);">label_60min_12</div>
<div class="t" style="left:1512.60px;top:879.85px;color:#4a60aa;font-weight:bold;font-style:italic;transform:scaleX(1.0294);">text</div>
<div class="t" style="left:1329.20px;top:909.20px;color:#0b1563;font-style:italic;transform:scaleX(1.0268);">time_dimension_time_key_idx</div>
<div class="t" style="left:1598.20px;top:909.20px;color:#4a60aa;font-weight:bold;font-style:italic;transform:scaleX(1.0160);">index</div>
</body></html>
